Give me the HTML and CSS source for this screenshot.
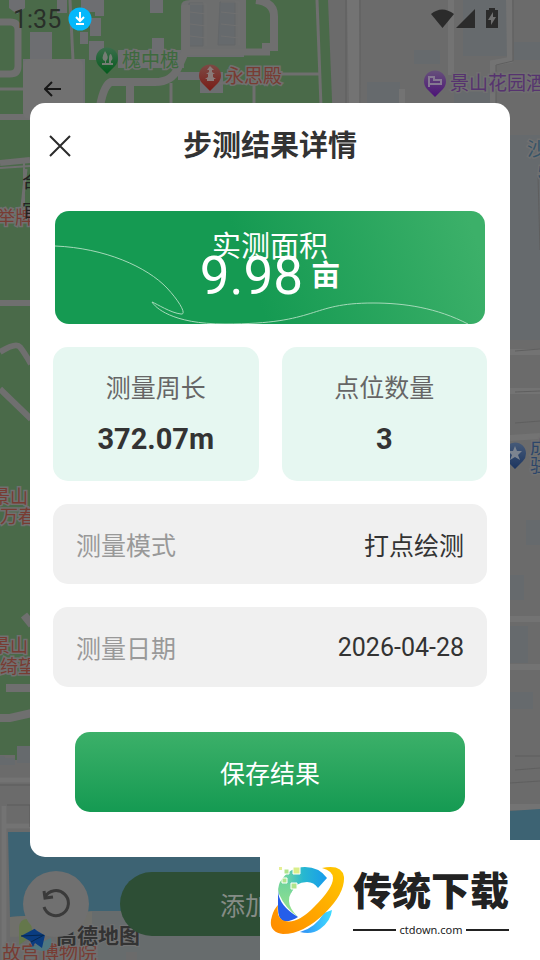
FILE: index.html
```html
<!DOCTYPE html>
<html lang="zh-CN">
<head>
    <meta charset="UTF-8">
    <meta name="viewport" content="width=device-width, initial-scale=1.0">
    <title>步测结果详情</title>
    <link rel="stylesheet" href="styles.css">
</head>
<body>
    <div class="app">
        <!-- Map background -->
        <svg class="map" viewBox="0 0 540 960" preserveAspectRatio="xMidYMid slice" aria-hidden="true">
            <defs>
                <path id="pin" d="M0 16 L-8 8 A11 11 0 1 1 8 8 Z"/>
                <linearGradient id="pin-green" x1="0" y1="0" x2="0" y2="1"><stop offset="0" stop-color="#3b6e4c"/><stop offset="1" stop-color="#045a1c"/></linearGradient>
                <linearGradient id="pin-red" x1="0" y1="0" x2="0" y2="1"><stop offset="0" stop-color="#7c4a45"/><stop offset="1" stop-color="#7a1c16"/></linearGradient>
                <linearGradient id="pin-purple" x1="0" y1="0" x2="0" y2="1"><stop offset="0" stop-color="#66507a"/><stop offset="1" stop-color="#4c1278"/></linearGradient>
                <linearGradient id="pin-blue" x1="0" y1="0" x2="0" y2="1"><stop offset="0" stop-color="#465a78"/><stop offset="1" stop-color="#1c3560"/></linearGradient>
            </defs>
            <rect width="540" height="960" fill="#6b6b6b"/>
            <path fill="#4a6a49" d="M0 0H328L336 200V760H0Z"/>
            <g fill="#6d6e71">
                <path d="M9 0H25V8L17 14L9 8ZM57 0H67V13H57ZM81 0H104V16H95V12H81ZM90 18H101V36H90ZM80 32H88V44H80ZM30 32H52V62H30ZM89 41H104V60H89ZM150 0H163V13H150ZM152 38H164V56H152ZM118 50H184V68H118ZM178 52H244V57H178Z"/>
                <path d="M178 72H223V93H200V80H178Z"/>
            </g>
            <path fill="#6d6e6e" d="M181 48V6Q181 0 190 0H246V50H181Z"/>
            <g fill="#666a6d" stroke="#646769">
                <path d="M189 3H203V46H187ZM220 2H235V45H218Z"/>
                <path stroke="#707070" fill="none" d="M190 4H206V46M221 2H239V45M190 12L206 14M190 24L206 26M190 36L206 38M221 12L239 14M221 24L239 26M221 36L239 38"/>
            </g>
            <g fill="none" stroke="#6f6f6f">
                <path stroke-width="7" d="M0 22H10Q18 22 18 30V66Q18 74 10 74H0M184 52H270"/>
                <path stroke-width="8" d="M100 106Q104 85 111 82H155Q172 82 178 68L186 50V5M130 82V106"/>
                <path stroke-width="3" d="M70 0L73 60M0 89H24M171 83V106M200 83H248M254 84V106M282 74H320M317 0L321 106"/>
                <path stroke-width="8" d="M256 0Q274 2 274 16V47H262"/>
                <path stroke-width="6" d="M0 117H30M0 163L30 160M0 303H30"/>
                <path stroke-width="2" d="M24 210V160M0 168L30 166"/>
                <path stroke-width="6" d="M0 352Q16 342 20 347T31 364M0 389L31 419"/>
                <path stroke-width="3" d="M26 169L22 207"/>
                <path stroke-width="8" d="M24 615L32 625M6 688H32M0 718H10L32 713"/>
            </g>
            <rect x="23" y="59" width="62" height="48" fill="#6d6e71"/>
            <path fill="#6b6b6b" d="M17 746H30V960H0V755H15V765H17Z"/>
            <path fill="#666a6d" d="M17 746H31V763H17ZM0 756H4L5 758H15V765H0Z"/>
            <path fill="none" stroke="#737373" stroke-width="5" d="M0 780H30M4 806V960M4 826H30"/>
            <path fill="none" stroke="#5d5d5d" d="M0 785H30M7 805H30V827"/>
            <!-- east side blocks -->
            <path fill="#666a6d" d="M367 82H400V103H367ZM414 50H440V64H414ZM463 0H512V56H463ZM514 42H540V60H514ZM454 76H490V103H454ZM510 135H540V340H510ZM526 520H540V545H526ZM510 575H524V600H510ZM510 626H528V663H510ZM510 692H533V709H510Z"/>
            <g fill="none" stroke="#737373">
                <path stroke-width="12" d="M353 0L355 105"/>
                <path stroke-width="6" d="M402 103V89M451 0V75M509 0L510 60L493 63V105M510 352H540M510 391H540M510 438L540 436M510 619H540M510 667H540M510 807H540"/>
            </g>
            <g fill="none" stroke="#5f5f5f">
                <path d="M346 0V103M360 0V103M513 0V61L496 65V103M515 351L540 349M515 392L540 391M515 423L540 421M538 175L540 250M515 756H540M515 770L540 768M510 783L540 781"/>
            </g>
            <path fill="#3d6373" d="M8 832H30V857H260V911H96L10 917ZM510 811L540 809V840H510Z"/>
            <path fill="#3d6373" d="M28 832H60V860H28Z"/>
            <path fill="#70706b" d="M10 917L96 911H260V930L10 937Z"/>
            <path fill="#676c6d" d="M92 911H260V960H137V952H126V960H92Z"/>
            <!-- places -->
            <g class="place">
                <use href="#pin" x="107" y="58" fill="url(#pin-green)"/>
                <path fill="#747d74" d="M105 51Q110 58 106 61V63H109V59Q109 54 111 54Q114 59 111 61V63H113V65H102V63H105V61Q100 60 105 51Z"/>
                <text class="park" x="122" y="67">槐中槐</text>
                <use href="#pin" x="210" y="75" fill="url(#pin-red)"/>
                <path fill="#8a7b79" d="M210 66L214 70H212V72L215 74H213V77L216 79H214V81H207V79H205L208 77V74H206L209 72V70H207Z"/>
                <text class="sight" x="225" y="83">永思殿</text>
                <use href="#pin" x="435" y="81" fill="url(#pin-purple)"/>
                <path fill="none" stroke="#857991" stroke-width="2" d="M429 76V87M430 84H441V80H434V77H430"/>
                <text class="hotel" x="450" y="90">景山花园酒</text>
                <use href="#pin" x="515" y="453" fill="url(#pin-blue)"/>
                <path fill="#7c8490" d="M515 446L517 451L522 451L518 455L520 460L515 457L510 460L512 455L508 451L513 451Z"/>
                <text class="traffic" x="527" y="156">沙</text>
                <text class="traffic" x="537" y="179">5</text>
                <g class="small">
                    <text class="landmark" x="530" y="454">成</text>
                    <text class="landmark" x="530" y="472">驻</text>
                    <text class="sight" x="-3" y="224">举牌</text>
                    <text class="sight" x="-8" y="503">景山</text>
                    <text class="sight" x="0" y="523">万春</text>
                    <text class="sight" x="-8" y="652">景山</text>
                    <text class="sight" x="0" y="673">绮望</text>
                </g>
                <text class="sight" x="2" y="960">故宫博物院</text>
            </g>
            <text class="tool-text" x="22" y="188">合</text>
            <text class="tool-text" x="22" y="217">官</text>
            <!-- map provider -->
            <path fill="#64774b" d="M19 945V927Q20 919 27 919Q33 923 32 936Z"/>
            <path fill="#4f7780" d="M29 948L51 938Q53 951 42 951Z"/>
            <path fill="#0a3c80" d="M21 936L36 928L45 935L42 948L35 943L33 947L30 941Z"/>
            <path fill="none" stroke="#05274f" d="M21 936L44 935L31 942"/>
            <text class="provider" x="56" y="943">高德地图</text>
        </svg>

        <!-- Page under the dialog -->
        <div class="page">
            <div class="status-bar">
                <span class="clock">1:35</span>
                <svg width="24" height="24" viewBox="0 0 24 24">
                    <circle cx="12" cy="12" r="11.500" fill="#05b8fb"/>
                    <path d="M12 5V14M8 10L12 14L16 10M8 17H16" fill="none" stroke="#fff" stroke-width="2"/>
                </svg>
                <svg class="signals" width="70" height="24" viewBox="0 0 70 24" fill="#2b2b2b">
                    <path d="M2 7Q13 -2 25 7L13.500 21Z"/>
                    <path d="M27 21L46 2V21Z"/>
                    <path d="M57 3H60V1H66V3H69V21H57Z"/>
                    <path d="M64 5L59 13H62V18L67 10H64Z" fill="#707070"/>
                </svg>
            </div>
            <button class="back-btn" type="button" aria-label="返回">
                <svg width="18" height="16" viewBox="0 0 18 16"><path d="M8 1L1 8L8 15M1 8H17" fill="none" stroke="#171717" stroke-width="2"/></svg>
            </button>
            <div class="bottom-bar">
                <button class="undo-btn" type="button" aria-label="撤销">
                    <svg width="30" height="30" viewBox="0 0 30 30">
                        <path d="M4 8A12.500 12.500 0 1 1 3 18" fill="none" stroke="#3a3a3a" stroke-width="3"/>
                        <path d="M3 2L4 9L12 8" fill="none" stroke="#3a3a3a" stroke-width="3"/>
                    </svg>
                </button>
                <button class="add-btn" type="button">添加</button>
            </div>
        </div>

        <!-- Result dialog -->
        <main class="dialog" role="dialog" aria-labelledby="dialog-title">
            <header class="dialog-header">
                <button class="close-btn" type="button" aria-label="关闭">
                    <svg width="22" height="22" viewBox="0 0 22 22"><path d="M1 1L21 21M21 1L1 21" fill="none" stroke="#2b2b2b" stroke-width="2"/></svg>
                </button>
                <h1 id="dialog-title">步测结果详情</h1>
            </header>

            <section class="area-banner">
                <svg class="banner-line" viewBox="0 0 430 113" preserveAspectRatio="none">
                    <path d="M0 35C50 37 92 56 112 77C125 91 132 104 126 103C116 102 102 93 97 91C100 96 116 113 170 113C265 113 253 92 318 92C350 92 382 97 413 113" fill="none" stroke="#a5d9b9"/>
                </svg>
                <h2>实测面积</h2>
                <p class="area-value">9.98<span>亩</span></p>
            </section>

            <div class="stats">
                <section class="stat">
                    <h3>测量周长</h3>
                    <p>372.07m</p>
                </section>
                <section class="stat">
                    <h3>点位数量</h3>
                    <p>3</p>
                </section>
            </div>

            <div class="info-row">
                <span>测量模式</span>
                <strong>打点绘测</strong>
            </div>
            <div class="info-row">
                <span>测量日期</span>
                <strong>2026-04-28</strong>
            </div>

            <button class="save-btn" type="button">保存结果</button>
        </main>

        <!-- Site badge -->
        <aside class="badge">
            <svg width="76" height="72" viewBox="0 0 76 72">
                <defs>
                    <linearGradient id="ring" x1="0" y1="1" x2="1" y2="0"><stop offset="0" stop-color="#ff8a00"/><stop offset="1" stop-color="#ffc800"/></linearGradient>
                    <linearGradient id="arc" x1="0" y1="0" x2="1" y2="0"><stop offset="0" stop-color="#8ee08d"/><stop offset=".5" stop-color="#27b8d0"/><stop offset="1" stop-color="#189bed"/></linearGradient>
                    <linearGradient id="side" x1="0" y1="0" x2="0" y2="1"><stop offset="0" stop-color="#6fd39c"/><stop offset="1" stop-color="#9ce58a"/></linearGradient>
                    <linearGradient id="tail" x1="0" y1="0" x2="1" y2="0"><stop offset="0" stop-color="#2e8cf5"/><stop offset="1" stop-color="#40dcff"/></linearGradient>
                </defs>
                <path fill="url(#arc)" d="M11 18Q20 3 36 3Q50 3 58 14L49 24Q45 18 38 18Q26 18 22 29L10 30Z"/>
                <path fill="url(#side)" d="M11 18Q8 25 10 30Q16 44 29 53Q20 44 20 37Q20 32 22 29L27 21Z"/>
                <path fill="#255eea" d="M9 27Q10 42 29 53Q22 58 14 57Q9 54 9 45Z"/>
                <path fill="url(#tail)" d="M31 68Q46 64 55 49L63 46Q62 57 51 65Q43 71 31 68Z"/>
                <path fill="url(#ring)" d="M53 4Q73 0 75 13Q76 29 57 48Q35 70 14 70Q-2 68 3 52Q5 45 9 41Q7 55 16 57Q29 60 46 42Q64 24 64 14Q64 7 53 4Z"/>
                <path fill="#d9ee8a" stroke="#fff" d="M24 3H31V10H24Z"/>
                <path fill="#afe48d" stroke="#fff" d="M15 5H20V10H15ZM13 14H18V19H13ZM22 19H28V25H22Z"/>
                <path fill="#e6ef95" d="M10 3H13V6H10Z"/>
            </svg>
            <div class="badge-name">
                <b>传统下载</b>
                <small>ctdown.com</small>
            </div>
        </aside>
    </div>
</body>
</html>
```
FILE: styles.css
```css
* {
    margin: 0;
    padding: 0;
    box-sizing: border-box;
}
body {
    font-family: Roboto, 'Noto Sans CJK SC', sans-serif;
    background: #6b6b6b;
    color: #333;
}
button {
    border: none;
    background: none;
    font: inherit;
    cursor: pointer;
}
svg {
    display: block;
    flex-shrink: 0;
}
.app {
    position: relative;
    display: grid;
    min-height: 100vh;
    overflow: hidden;
}
.page,
.dialog {
    grid-area: 1 / 1;
}

/* map */
.map {
    position: absolute;
    width: 100%;
    height: 100%;
}
.place text {
    font-size: 19px;
    paint-order: stroke;
    stroke: #707070;
    stroke-width: 3px;
}
.place .small text {
    font-size: 18px;
}
.place .park {
    fill: #3d6a3e;
}
.place .sight {
    fill: #783c33;
}
.place .hotel {
    fill: #56336f;
}
.place .traffic {
    fill: #365468;
}
.place .landmark {
    fill: #2c466a;
}
.tool-text {
    font-size: 18px;
    fill: #222;
}
.provider {
    font-size: 21px;
    font-weight: bold;
    fill: #333;
    paint-order: stroke;
    stroke: #737373;
    stroke-width: 2px;
}

/* page */
.page {
    position: relative;
    display: flex;
    flex-direction: column;
}
.status-bar {
    display: flex;
    align-items: center;
    gap: 7px;
    height: 38px;
    padding: 0 41px 0 13px;
}
.clock {
    font-size: 25px;
    color: #292f29;
}
.signals {
    margin-left: auto;
}
.back-btn {
    display: grid;
    place-items: center;
    width: 60px;
    height: 60px;
    margin: 21px 0 0 23px;
    border-radius: 6px;
    background: #717171;
}
.bottom-bar {
    display: flex;
    align-items: center;
    gap: 31px;
    margin-top: auto;
    padding: 0 23px 23px;
}
.undo-btn {
    display: grid;
    place-items: center;
    width: 66px;
    height: 66px;
    border-radius: 50%;
    background: #707070;
}
.add-btn {
    height: 64px;
    padding: 0 100px;
    border-radius: 32px;
    background: #2d4e35;
    color: #858c86;
    font-size: 25px;
}

/* dialog */
.dialog {
    position: relative;
    align-self: start;
    display: flex;
    flex-direction: column;
    gap: 23px;
    margin: 103px 30px;
    padding: 0 23px 45px;
    border-radius: 15px;
    background: #fff;
}
.dialog-header {
    display: grid;
    grid-template-columns: 22px 1fr 22px;
    align-items: center;
    height: 85px;
    margin: 0 -4px;
}
.dialog-header h1 {
    font-size: 29px;
    line-height: 38px;
    text-align: center;
}
.area-banner {
    position: relative;
    min-height: 113px;
    margin: 0 2px;
    padding-top: 21px;
    border-radius: 14px;
    background: linear-gradient(70deg, #159a52 45%, #3cb069 96%);
    color: #fff;
    text-align: center;
    overflow: hidden;
}
.banner-line {
    position: absolute;
    inset: 0;
    width: 100%;
    height: 100%;
}
.area-banner h2 {
    position: relative;
    font-size: 29px;
    font-weight: normal;
    line-height: 30px;
}
.area-value {
    position: relative;
    display: flex;
    justify-content: center;
    align-items: center;
    gap: 8px;
    font-size: 53px;
    line-height: 28px;
}
.area-value span {
    font-size: 29px;
    font-weight: bold;
}
.stats {
    display: grid;
    grid-template-columns: 1fr 1fr;
    gap: 23px;
}
.stat {
    display: grid;
    gap: 14px;
    padding: 24px 0;
    border-radius: 15px;
    background: #e6f7f1;
    text-align: center;
    line-height: 36px;
}
.stat h3 {
    font-size: 25px;
    font-weight: normal;
    color: #666;
}
.stat p {
    font-size: 29px;
    font-weight: bold;
}
.info-row {
    display: flex;
    justify-content: space-between;
    align-items: center;
    height: 80px;
    padding: 0 23px;
    border-radius: 15px;
    background: #f0f0f0;
    font-size: 25px;
}
.info-row span {
    color: #999;
}
.info-row strong {
    font-weight: normal;
}
.save-btn {
    height: 80px;
    margin: 22px 22px 0;
    border-radius: 15px;
    background: linear-gradient(#3cb069, #159a52);
    color: #fff;
    font-size: 25px;
}

/* site badge */
.badge {
    position: absolute;
    right: 0;
    bottom: 0;
    display: flex;
    align-items: center;
    gap: 8px;
    width: 280px;
    height: 120px;
    padding-left: 9px;
    background: #fff;
    color: #222;
}
.badge-name {
    padding-top: 4px;
}
.badge-name b {
    display: block;
    font-size: 39px;
    font-weight: 900;
    line-height: 56px;
}
.badge-name small {
    display: flex;
    align-items: center;
    gap: 3px;
    font-family: 'Noto Sans', sans-serif;
    font-size: 11px;
    line-height: 20px;
}
.badge-name small::before,
.badge-name small::after {
    content: '';
    flex: 1;
    height: 2px;
    background: #222;
}
```
